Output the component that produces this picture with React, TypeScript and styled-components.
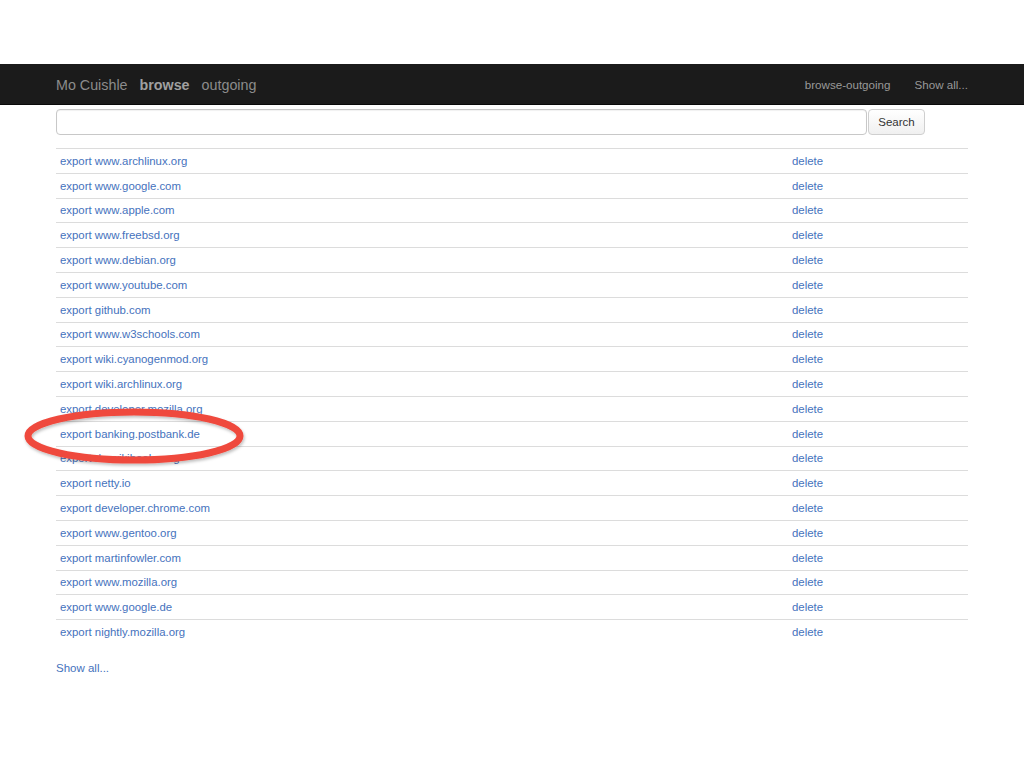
import React from "react";
import styled, { createGlobalStyle } from "styled-components";

const Global = createGlobalStyle`
  html, body { margin: 0; padding: 0; background: #fff; }
  body { font-family: "Liberation Sans", Arial, Helvetica, sans-serif; }
`;

const Page = styled.div`
  position: relative;
  width: 1024px;
  min-height: 768px;
  padding-top: 64px;
  box-sizing: border-box;
`;

const NavBar = styled.div`
  height: 41px;
  background: #1b1b1b;
  border-bottom: 1px solid #0a0a0a;
  box-sizing: border-box;
`;

const Container = styled.div`
  width: 912px;
  margin: 0 0 0 56px;
`;

const NavInner = styled(Container)`
  height: 100%;
  display: flex;
  align-items: center;
  justify-content: space-between;
  padding-top: 1px;
  box-sizing: border-box;
`;

const NavGroup = styled.div<{ $gap: number }>`
  display: flex;
  align-items: center;
  gap: ${(p) => p.$gap}px;
`;

const Brand = styled.span<{ $bold?: boolean }>`
  font-size: 14.3px;
  color: ${(p) => (p.$bold ? "#a0a0a0" : "#8c8c8c")};
  font-weight: ${(p) => (p.$bold ? 700 : 400)};
`;

const NavLink = styled.span`
  font-size: 11.6px;
  color: #999;
`;

const SearchRow = styled(Container)`
  display: flex;
  margin-top: 4px;
  height: 26px;
`;

const SearchInput = styled.input`
  width: 811px;
  height: 26px;
  box-sizing: border-box;
  border: 1px solid #c8c8c8;
  border-radius: 4px;
  box-shadow: inset 0 1px 1px rgba(0, 0, 0, 0.06);
  margin: 0;
`;

const SearchButton = styled.button`
  width: 57px;
  height: 26px;
  margin-left: 1px;
  box-sizing: border-box;
  border: 1px solid #cfcfcf;
  border-radius: 4px;
  background: linear-gradient(#ffffff, #f0f0f0);
  font-family: "Liberation Sans", Arial, sans-serif;
  font-size: 11.5px;
  color: #333;
  padding: 0;
`;

const Table = styled.div`
  width: 912px;
  margin: 13px 0 0 56px;
  display: flex;
  flex-direction: column;
`;

const Row = styled.div`
  display: grid;
  grid-template-columns: 732px 1fr;
  border-top: 1px solid #dcdcdc;
  height: 24.8px;
  box-sizing: border-box;
  align-items: center;
`;

const Cell = styled.span`
  padding: 0 4px;
  font-size: 11.4px;
  color: #4572bd;
  line-height: 16px;
`;

const Footer = styled.div`
  margin: 18px 0 0 56px;
  font-size: 11.5px;
  color: #4572bd;
`;

const Mark = styled.svg`
  position: absolute;
  left: 20px;
  top: 405px;
  pointer-events: none;
`;

const hosts = [
  "www.archlinux.org",
  "www.google.com",
  "www.apple.com",
  "www.freebsd.org",
  "www.debian.org",
  "www.youtube.com",
  "github.com",
  "www.w3schools.com",
  "wiki.cyanogenmod.org",
  "wiki.archlinux.org",
  "developer.mozilla.org",
  "banking.postbank.de",
  "de.wikibooks.org",
  "netty.io",
  "developer.chrome.com",
  "www.gentoo.org",
  "martinfowler.com",
  "www.mozilla.org",
  "www.google.de",
  "nightly.mozilla.org",
];

export default function App() {
  return (
    <Page>
      <Global />
      <NavBar>
        <NavInner>
          <NavGroup $gap={12}>
            <Brand>Mo Cuishle</Brand>
            <Brand $bold>browse</Brand>
            <Brand>outgoing</Brand>
          </NavGroup>
          <NavGroup $gap={24}>
            <NavLink>browse-outgoing</NavLink>
            <NavLink>Show all...</NavLink>
          </NavGroup>
        </NavInner>
      </NavBar>
      <SearchRow>
        <SearchInput type="text" />
        <SearchButton>Search</SearchButton>
      </SearchRow>
      <Table>
        {hosts.map((h) => (
          <Row key={h}>
            <Cell>export {h}</Cell>
            <Cell>delete</Cell>
          </Row>
        ))}
      </Table>
      <Footer>Show all...</Footer>
      <Mark width="230" height="64" viewBox="0 0 230 64">
        <defs>
          <filter id="sh" x="-10%" y="-30%" width="120%" height="160%">
            <feDropShadow dx="1" dy="2" stdDeviation="1.5" floodColor="#000" floodOpacity="0.25" />
          </filter>
        </defs>
        <ellipse cx="114" cy="31" rx="106" ry="24" fill="none" stroke="#ef4a3e" strokeWidth="7" filter="url(#sh)" />
      </Mark>
    </Page>
  );
}
